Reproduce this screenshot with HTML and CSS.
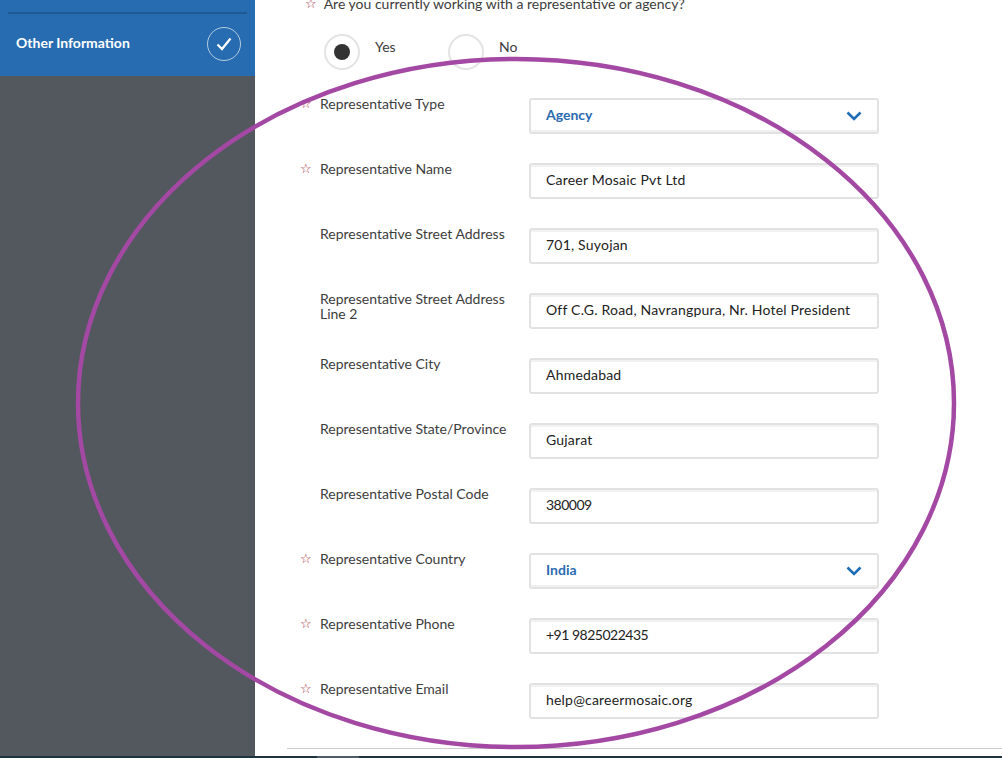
FILE: index.html
```html
<!DOCTYPE html>
<html lang="en">
<head>
  <meta charset="UTF-8">
  <meta name="viewport" content="width=device-width, initial-scale=1.0">
  <title>Other Information</title>
  <link rel="stylesheet" href="styles.css">
</head>
<body>
  <div class="page">
    <aside class="sidebar">
      <div class="side-active">
        <div class="side-line"></div>
        <div class="side-item">
          <span class="side-text">Other Information</span>
          <span class="side-check">
            <svg width="20" height="20" viewBox="0 0 20 20"><path d="M3.5 10.5 L8 15 L16.5 4.5" fill="none" stroke="#fff" stroke-width="2.2"/></svg>
          </span>
        </div>
      </div>
    </aside>
    <main class="main">
      <div class="question"><span class="star">☆</span>Are you currently working with a representative or agency?</div>
      <div class="radios">
        <div class="radio-opt"><span class="radio radio-on"></span><span class="radio-label">Yes</span></div>
        <div class="radio-opt"><span class="radio"></span><span class="radio-label">No</span></div>
      </div>
      <form class="fields">
        <div class="row">
          <span class="star">☆</span>
          <label>Representative Type</label>
          <div class="field select">Agency
            <svg width="16" height="10" viewBox="0 0 16 10"><path d="M1.5 1.5 L8 8 L14.5 1.5" fill="none" stroke="#1f6db5" stroke-width="2.6"/></svg>
          </div>
        </div>
        <div class="row">
          <span class="star">☆</span>
          <label>Representative Name</label>
          <div class="field">Career Mosaic Pvt Ltd</div>
        </div>
        <div class="row">
          <span></span>
          <label>Representative Street Address</label>
          <div class="field">701, Suyojan</div>
        </div>
        <div class="row">
          <span></span>
          <label>Representative Street Address Line 2</label>
          <div class="field">Off C.G. Road, Navrangpura, Nr. Hotel President</div>
        </div>
        <div class="row">
          <span></span>
          <label>Representative City</label>
          <div class="field">Ahmedabad</div>
        </div>
        <div class="row">
          <span></span>
          <label>Representative State/Province</label>
          <div class="field">Gujarat</div>
        </div>
        <div class="row">
          <span></span>
          <label>Representative Postal Code</label>
          <div class="field field-num">380009</div>
        </div>
        <div class="row">
          <span class="star">☆</span>
          <label>Representative Country</label>
          <div class="field select">India
            <svg width="16" height="10" viewBox="0 0 16 10"><path d="M1.5 1.5 L8 8 L14.5 1.5" fill="none" stroke="#1f6db5" stroke-width="2.6"/></svg>
          </div>
        </div>
        <div class="row">
          <span class="star">☆</span>
          <label>Representative Phone</label>
          <div class="field field-num">+91 9825022435</div>
        </div>
        <div class="row">
          <span class="star">☆</span>
          <label>Representative Email</label>
          <div class="field">help@careermosaic.org</div>
        </div>
      </form>
      <hr class="rule">
    </main>
  </div>
  <div class="taskbar"><span class="task-tab"></span></div>
  <!-- hand drawn annotation over the form -->
  <svg class="circle-mark" width="1002" height="758" viewBox="0 0 1002 758">
    <ellipse cx="516" cy="403" rx="438" ry="344" fill="none" stroke="#a349a4" stroke-width="4.5"/>
  </svg>
</body>
</html>
```

FILE: styles.css
```css
html, body {
  margin: 0;
  height: 758px;
  overflow: hidden;
  background: #fff;
}

body {
  font-family: "Lato", "Open Sans", sans-serif;
  font-size: 14px;
  color: #3d3d3d;
}

.page {
  display: flex;
  height: 756px;
}

/* Sidebar */
.sidebar {
  width: 255px;
  flex: none;
  background: #53575e;
}

.side-active {
  height: 76px;
  padding: 12px 8px 0;
  box-sizing: border-box;
  background: #276cb0;
}

.side-line {
  height: 2px;
  background: #1d5a94;
}

.side-item {
  display: flex;
  align-items: center;
  justify-content: space-between;
  padding: 13px 6px 0 8px;
  color: #fff;
  font-weight: 700;
}

.side-text {
  margin-bottom: 4px;
}

.side-check {
  display: flex;
  align-items: center;
  justify-content: center;
  width: 32px;
  height: 32px;
  border: 1px solid #b4cde4;
  border-radius: 50%;
}

/* Main form */
.main {
  flex: 1;
  min-width: 0;
}

.star {
  color: #a8273c;
  font-family: "DejaVu Sans", sans-serif;
  font-size: 13px;
  line-height: 15px;
}

.question {
  display: flex;
  gap: 7px;
  margin: -4px 0 0 50px;
  line-height: 15px;
}

.radios {
  display: flex;
  gap: 14px;
  margin: 23px 0 0 69px;
}

.radio-opt {
  display: flex;
  align-items: flex-start;
  gap: 15px;
  width: 110px;
}

.radio {
  position: relative;
  width: 32px;
  height: 32px;
  border: 2px solid #e4e4e4;
  border-radius: 50%;
}

.radio-on::after {
  content: "";
  position: absolute;
  top: 8px;
  left: 8px;
  width: 16px;
  height: 16px;
  border-radius: 50%;
  background: #333;
}

.radio-label {
  margin-top: 5px;
  line-height: 15px;
}

.fields {
  margin: 28px 0 0 46px;
}

.row {
  display: grid;
  grid-template-columns: 19px 209px 350px;
  margin-bottom: 29px;
}

.row .star {
  margin: -2px 0 0 -1px;
}

.row label {
  grid-column: 2;
  margin-top: -2px;
  line-height: 15px;
}

.row .field {
  grid-column: 3;
}

.field {
  display: flex;
  align-items: center;
  justify-content: space-between;
  height: 36px;
  padding: 0 15px 3px;
  box-sizing: border-box;
  border: 2px solid #e2e2e2;
  border-radius: 3px;
  box-shadow: inset 0 2px 0 #f2f2f2;
  white-space: nowrap;
  letter-spacing: 0.2px;
  color: #222;
  background: #fff;
}

.field-num {
  letter-spacing: -0.5px;
}

.select {
  color: #2a6bb0;
  font-weight: 700;
  letter-spacing: 0;
  box-shadow: inset 0 -2px 0 #f0f0f0;
}

.select svg {
  margin-top: 3px;
}

.rule {
  margin: 0 0 0 32px;
  border: 0;
  border-top: 1px solid #ccc;
}

.taskbar {
  height: 2px;
  background: #1f333f;
}

.task-tab {
  display: block;
  width: 42px;
  height: 2px;
  margin-left: 317px;
  background: #4d5c66;
}

.circle-mark {
  position: absolute;
  top: 0;
  left: 0;
  pointer-events: none;
}
```
